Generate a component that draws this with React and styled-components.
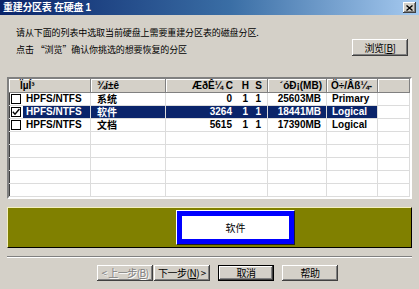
import React from 'react';
import styled, { createGlobalStyle } from 'styled-components';

const CJK = `"Noto Sans CJK SC", "Liberation Sans", sans-serif`;
const LAT = `"Liberation Sans", "Noto Sans CJK SC", sans-serif`;

const Global = createGlobalStyle`
  html, body { margin: 0; padding: 0; background: #d4d0c8; }
  body { width: 419px; height: 289px; overflow: hidden; font-family: ${LAT}; }
  * { box-sizing: border-box; }
`;

const Dialog = styled.div`
  width: 419px;
  height: 289px;
  background: #d4d0c8;
  display: flex;
  flex-direction: column;
`;

const TitleBar = styled.div`
  height: 15px;
  background: linear-gradient(to right, #0a246a 0%, #3a6ea5 55%, #a6caf0 100%);
  display: flex;
  align-items: center;
  justify-content: space-between;
  padding: 0 3px 0 3px;
`;

const Title = styled.span`
  color: #fff;
  font: bold 10px/15px ${LAT};
  letter-spacing: -0.3px;
  white-space: pre;
`;

const CloseBtn = styled.div`
  width: 13px;
  height: 11px;
  background: #d4d0c8;
  box-shadow: inset -1px -1px #404040, inset 1px 1px #fff, inset -2px -2px #808080;
  display: flex;
  align-items: center;
  justify-content: center;
`;

const Body = styled.div`
  padding: 9px 7px 0;
  display: flex;
  flex-direction: column;
`;

const Intro = styled.div`
  display: flex;
  justify-content: space-between;
  align-items: flex-end;
  padding: 0 4px 0 9px;
`;

const IntroText = styled.div`
  font: 9px/17px ${CJK};
  letter-spacing: -0.1px;
  color: #000;
  white-space: pre;
`;

const Button = styled.div`
  width: ${p => p.$w || 56}px;
  height: ${p => p.$h || 16}px;
  background: #d4d0c8;
  box-shadow: ${p => p.$default
    ? 'inset 0 0 0 1px #000, inset -2px -2px #404040, inset 2px 2px #fff, inset -3px -3px #808080'
    : 'inset -1px -1px #404040, inset 1px 1px #fff, inset -2px -2px #808080'};
  display: flex;
  align-items: center;
  justify-content: center;
  font: 10px/1 ${CJK};
  letter-spacing: -0.5px;
  color: ${p => p.$disabled ? '#808080' : '#000'};
  text-shadow: ${p => p.$disabled ? '1px 1px #fff' : 'none'};
  margin-bottom: ${p => p.$mb || 0}px;
  white-space: pre;
  u { text-decoration: underline; }
`;

const List = styled.div`
  margin-top: 19px;
  height: 122px;
  border: 2px solid;
  border-color: #808080 #fff #fff #808080;
  box-shadow: inset 1px 1px #404040, inset -1px -1px #d4d0c8;
  background: #fff;
  display: flex;
  flex-direction: column;
  overflow: hidden;
`;

const COLS = '82px 75px 102px 59px 51px 1fr';

const HeaderRow = styled.div`
  display: grid;
  grid-template-columns: ${COLS};
  height: 14px;
`;

const HeaderCell = styled.div`
  background: #d4d0c8;
  box-shadow: inset -1px -1px #808080, inset 1px 1px #fff;
  font: bold 10px/14px ${LAT};
  color: #000;
  padding: ${p => p.$pl !== undefined ? `0 0 0 ${p.$pl}px` : '0 5px 0 6px'};
  text-align: ${p => p.$right ? 'right' : 'left'};
  white-space: pre;
  overflow: hidden;
  display: ${p => p.$split ? 'flex' : 'block'};
`;

const Row = styled.div`
  display: grid;
  grid-template-columns: ${COLS};
  height: 13px;
`;

const Cell = styled.div`
  border-right: 1px solid #dcdcdc;
  border-bottom: 1px solid #dcdcdc;
  background: ${p => p.$sel ? '#0a246a' : 'transparent'};
  color: ${p => p.$sel ? '#fff' : '#000'};
  font: bold 10px/12px ${p => p.$cjk ? CJK : LAT};
  padding: ${p => p.$right ? '0 5px 0 0' : '0 0 0 6px'};
  text-align: ${p => p.$right ? 'right' : 'left'};
  white-space: pre;
  display: ${p => p.$split ? 'flex' : 'block'};
`;

const FirstCell = styled.div`
  border-right: 1px solid #dcdcdc;
  border-bottom: 1px solid #dcdcdc;
  display: flex;
  align-items: stretch;
  padding-left: 2px;
`;

const Check = styled.div`
  width: 10px;
  height: 10px;
  margin-top: 1px;
  border: 1px solid #000;
  background: #fff;
  display: flex;
  align-items: center;
  justify-content: center;
  flex: none;
`;

const FsText = styled.div`
  flex: 1;
  margin-left: 2px;
  padding-left: 3px;
  background: ${p => p.$sel ? '#0a246a' : 'transparent'};
  color: ${p => p.$sel ? '#fff' : '#000'};
  font: bold 10px/12px ${LAT};
  white-space: pre;
`;

const SubC = styled.span`
  flex: 1;
  text-align: right;
`;
const SubN = styled.span`
  width: ${p => p.$w}px;
  text-align: right;
  flex: none;
`;

const Olive = styled.div`
  margin-top: 8px;
  height: 41px;
  background: #808000;
  border: 1px solid;
  border-color: #f4efc0 #000 #000 #f4efc0;
  display: flex;
  align-items: center;
  padding-left: 168px;
`;

const NameBox = styled.div`
  width: 119px;
  height: 35px;
  border: 1px solid;
  border-color: #fff #202020 #202020 #fff;
  background: #0000ff;
  padding: 5px;
`;

const NameInner = styled.div`
  width: 100%;
  height: 100%;
  background: #fff;
  display: flex;
  align-items: center;
  justify-content: center;
  font: 10px/1 ${CJK};
  color: #000;
`;

const Separator = styled.div`
  margin-top: 8px;
  height: 2px;
  border-top: 1px solid #808080;
  border-bottom: 1px solid #fff;
`;

const ButtonRow = styled.div`
  margin-top: 7px;
  display: flex;
  padding-left: 90px;
`;

const Gap = styled.div`
  width: ${p => p.$w}px;
`;

const rows = [
  { fs: 'HPFS/NTFS', label: '系统', c: '0', h: '1', s: '1', size: '25603MB', type: 'Primary', checked: false, sel: false },
  { fs: 'HPFS/NTFS', label: '软件', c: '3264', h: '1', s: '1', size: '18441MB', type: 'Logical', checked: true, sel: true },
  { fs: 'HPFS/NTFS', label: '文档', c: '5615', h: '1', s: '1', size: '17390MB', type: 'Logical', checked: false, sel: false },
];

const CheckMark = () => (
  <svg width="8" height="8" viewBox="0 0 8 8">
    <polyline points="0.8,3.8 3,6.2 7.4,1" fill="none" stroke="#000" strokeWidth="1.4" />
  </svg>
);

export default function App() {
  const empties = Array.from({ length: 8 - rows.length });
  return (
    <Dialog>
      <Global />
      <TitleBar>
        <Title>重建分区表 在硬盘 1</Title>
        <CloseBtn>
          <svg width="7" height="6" viewBox="0 0 7 6">
            <path d="M0.5 0.5 L6.5 5.5 M6.5 0.5 L0.5 5.5" stroke="#000" strokeWidth="1.4" />
          </svg>
        </CloseBtn>
      </TitleBar>
      <Body>
        <Intro>
          <IntroText>
            请从下面的列表中选取当前硬盘上需要重建分区表的磁盘分区.{'\n'}点击 “浏览”确认你挑选的想要恢复的分区
          </IntroText>
          <Button $h={17} $mb={2}>浏览[<u>B</u>]</Button>
        </Intro>
        <List>
          <HeaderRow>
            <HeaderCell $pl={11}>ÏµÍ³</HeaderCell>
            <HeaderCell>¾í±ê</HeaderCell>
            <HeaderCell $split style={{ paddingRight: 6 }}>
              <SubC>ÆðÊ¼ C</SubC><SubN $w={16}>H</SubN><SubN $w={13}>S</SubN>
            </HeaderCell>
            <HeaderCell $right>´óÐ¡(MB)</HeaderCell>
            <HeaderCell $pl={4}>Ö÷/Âß¼-</HeaderCell>
            <HeaderCell />
          </HeaderRow>
          {rows.map((r, i) => (
            <Row key={i}>
              <FirstCell>
                <Check>{r.checked && <CheckMark />}</Check>
                <FsText $sel={r.sel}>{r.fs}</FsText>
              </FirstCell>
              <Cell $sel={r.sel} $cjk>{r.label}</Cell>
              <Cell $sel={r.sel} $split style={{ paddingRight: 6, paddingLeft: 0 }}>
                <SubC>{r.c}</SubC><SubN $w={16}>{r.h}</SubN><SubN $w={13}>{r.s}</SubN>
              </Cell>
              <Cell $sel={r.sel} $right>{r.size}</Cell>
              <Cell $sel={r.sel} style={{ paddingLeft: 5 }}>{r.type}</Cell>
              <Cell />
            </Row>
          ))}
          {empties.map((_, i) => (
            <Row key={'e' + i}>
              <Cell /><Cell /><Cell /><Cell /><Cell /><Cell />
            </Row>
          ))}
        </List>
        <Olive>
          <NameBox>
            <NameInner>软件</NameInner>
          </NameBox>
        </Olive>
        <Separator />
        <ButtonRow>
          <Button $disabled>{'< 上一步('}<u>B</u>{')'}</Button>
          <Gap $w={1} />
          <Button>{'下一步('}<u>N</u>{') >'}</Button>
          <Gap $w={8} />
          <Button $default>取消</Button>
          <Gap $w={8} />
          <Button>帮助</Button>
        </ButtonRow>
      </Body>
    </Dialog>
  );
}
